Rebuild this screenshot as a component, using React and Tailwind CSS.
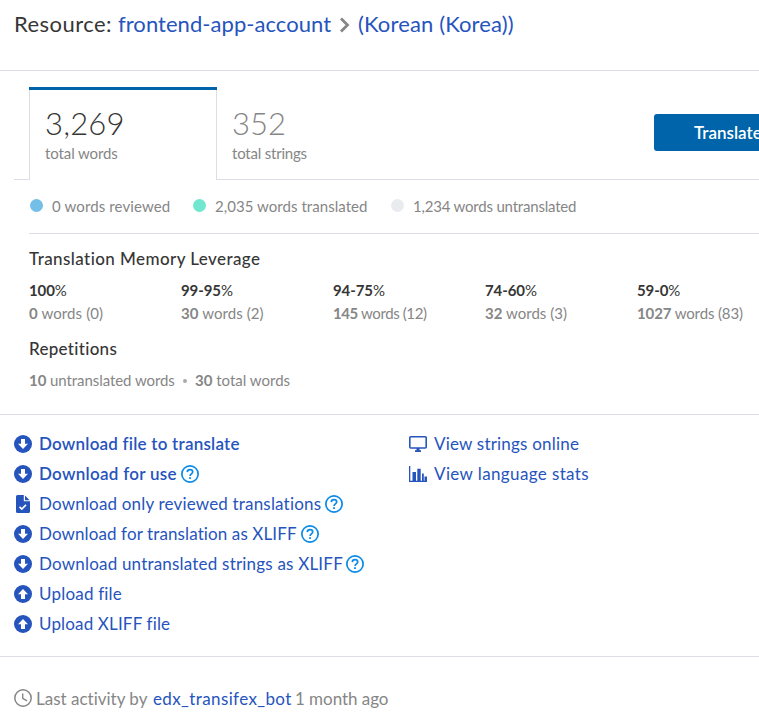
import React from "react";

const line = "border-[#dcdee5]";

function ArrowIcon({ up }) {
  return (
    <svg width="18" height="18" viewBox="0 0 18 18" className="block">
      <circle cx="9" cy="9" r="9" fill="#2654bd" />
      <path d={up ? "M9 4 14 9.2h-3V14H7V9.2H4z" : "M9 14 4 8.8h3V4h4v4.800h3z"} fill="#fff" />
    </svg>
  );
}

function FileCheckIcon() {
  return (
    <svg width="18" height="18" viewBox="0 0 18 18" className="block">
      <path d="M3.500 0H9.800v6.200H16V16.500A1.500 1.500 0 0 1 14.500 18h-11A1.500 1.500 0 0 1 2 16.500v-15A1.500 1.500 0 0 1 3.500 0z" fill="#2654bd" />
      <path d="M11 .6 15.600 5.200H11z" fill="#2654bd" />
      <path d="M5.500 11.800 7.800 14l4.200-4.200" fill="none" stroke="#fff" strokeWidth="1.700" />
    </svg>
  );
}

function HelpIcon() {
  return (
    <svg width="18" height="18" viewBox="0 0 18 18" className="block shrink-0">
      <circle cx="9" cy="9" r="8.150" fill="none" stroke="#0b8be6" strokeWidth="1.700" />
      <path d="M6.300 7.100A2.650 2.500 0 0 1 9 4.700c1.500 0 2.700.9 2.700 2.300 0 1.900-2.600 2-2.600 4" fill="none" stroke="#0b8be6" strokeWidth="1.700" />
      <rect x="8.100" y="12.200" width="1.800" height="1.800" fill="#0b8be6" />
    </svg>
  );
}

function MonitorIcon() {
  return (
    <svg width="18" height="18" viewBox="0 0 18 18" className="block">
      <rect x=".8" y="1.800" width="16.400" height="11.200" rx="1" fill="none" stroke="#2654bd" strokeWidth="1.600" />
      <path d="M7.500 13h3v2.300H12V17H6v-1.700h1.500z" fill="#2654bd" />
    </svg>
  );
}

function ChartIcon() {
  return (
    <svg width="18" height="18" viewBox="0 0 18 18" className="block">
      <path d="M0 1h1.300v14.700H18V17H0zM3.500 7H7v8.800H3.500zM8.300 3.700h3.400v12.100H8.300zM13 8.500h1.800v7.300H13zM15.500 11.500H18V16h-2.500z" fill="#2654bd" />
    </svg>
  );
}

function Action({ icon, label, className = "", help }) {
  return (
    <div className="flex h-[30px] items-center">
      <span className="w-[25px] shrink-0">{icon}</span>
      <a className={`whitespace-nowrap text-[17px] text-[#2654bd] ${className}`}>{label}</a>
      {help && <HelpIcon />}
    </div>
  );
}

function Legend({ color, label, className }) {
  return (
    <div className={`flex items-center ${className}`}>
      <span className={`mr-[9px] size-[13px] rounded-full ${color}`} />
      <span className="whitespace-nowrap text-[15px] leading-5">{label}</span>
    </div>
  );
}

const leverage = [
  ["100", "0", "(0)", "tracking-[0.1px]"],
  ["99-95", "30", "(2)", "tracking-[0.08px]"],
  ["94-75", "145", "(12)", "tracking-[-0.4px]"],
  ["74-60", "32", "(3)", "tracking-[0.02px]"],
  ["59-0", "1027", "(83)", "tracking-[-0.13px]"],
];

export default function App() {
  return (
    <div className="h-[726px] w-[759px] overflow-hidden bg-white font-['Lato',sans-serif] text-[#868686] [font-variant-ligatures:none]">
      <header className={`flex h-[71px] border-b ${line} pl-3.5 pt-[9px] text-[22px] leading-[30px] whitespace-nowrap`}>
        <span className="w-[104px] tracking-[0.45px] text-[#363636]">Resource:</span>
        <a className="w-[221px] tracking-[0.05px] text-[#2654bd]">frontend-app-account</a>
        <svg width="11" height="16" viewBox="0 0 11 16" className="mt-2 mr-2">
          <path d="M2 1.500 8.500 8 2 14.500" fill="none" stroke="#868686" strokeWidth="2.800" />
        </svg>
        <a className="tracking-[0.13px] text-[#2654bd]">(Korean (Korea))</a>
      </header>

      <section className="flex pt-4 pl-3.5">
        <div className={`w-[15px] shrink-0 border-b ${line}`} />
        <div className="w-[188px] shrink-0 border-t-[3px] border-[#0064ab]">
          <div className={`h-[90px] border-x ${line} pl-[15px] pt-[15px]`}>
            <div className="text-[31px] leading-9 font-light tracking-[0.2px] text-[#363636]">3,269</div>
            <div className="mt-[2px] text-[15px] leading-5 tracking-[-0.1px]">total words</div>
          </div>
        </div>
        <div className={`flex min-w-0 flex-1 border-b ${line} pl-[15px] pt-[18px]`}>
          <div className="w-[422px] shrink-0">
            <div className="text-[31px] leading-9 font-light">352</div>
            <div className="mt-[2px] text-[15px] leading-5 tracking-[-0.2px]">total strings</div>
          </div>
          <button className="mt-[9px] h-[37px] w-[150px] shrink-0 rounded-l-[3px] bg-[#0064ab] pl-10 text-left text-[17px] font-semibold text-white">Translate</button>
        </div>
      </section>

      <section className="pl-[29px]">
        <div className={`flex h-[54px] items-center border-b ${line} pb-[2px] pl-px`}>
          <Legend color="bg-[#74bfe8]" label="0 words reviewed" className="w-[163px] tracking-[0.12px]" />
          <Legend color="bg-[#72e7d0]" label="2,035 words translated" className="w-[198px] tracking-[0.05px]" />
          <Legend color="bg-[#e9ebef]" label="1,234 words untranslated" className="tracking-[-0.2px]" />
        </div>
        <h2 className="mt-[15px] text-[17px] leading-5 font-medium tracking-[0.42px] text-[#363636]">Translation Memory Leverage</h2>
        <div className="mt-[10px] flex text-[15px] leading-[23px] whitespace-nowrap">
          {leverage.map(([range, words, count, tracking]) => (
            <div key={range} className="w-[152px] shrink-0">
              <div className="tracking-[-0.1px] text-[#363636]"><b>{range}</b>%</div>
              <div className={tracking}><b>{words}</b> words {count}</div>
            </div>
          ))}
        </div>
        <h2 className="mt-[14px] text-[17px] leading-5 font-medium tracking-[0.3px] text-[#363636]">Repetitions</h2>
        <div className="mt-[11px] flex items-center text-[15px] leading-5 whitespace-nowrap">
          <span className="w-[154px] tracking-[-0.07px]"><b>10</b> untranslated words</span>
          <span className="mt-0.5 mr-2 size-1 rounded-full bg-[#aaaaaa]" />
          <span><b>30</b> total words</span>
        </div>
      </section>

      <section className={`mt-6 flex h-[243px] border-y ${line} pt-3.5 pl-3.5`}>
        <div className="w-[395px]">
          <Action icon={<ArrowIcon />} label="Download file to translate" className="font-semibold tracking-[0.22px]" />
          <Action icon={<ArrowIcon />} label="Download for use" className="w-[142px] font-semibold tracking-[0.28px]" help />
          <Action icon={<FileCheckIcon />} label="Download only reviewed translations" className="w-[286px] tracking-[0.18px]" help />
          <Action icon={<ArrowIcon />} label="Download for translation as XLIFF" className="w-[262px] tracking-[0.11px]" help />
          <Action icon={<ArrowIcon />} label="Download untranslated strings as XLIFF" className="w-[307px] tracking-[0.2px]" help />
          <Action icon={<ArrowIcon up />} label="Upload file" className="tracking-[0.2px]" />
          <Action icon={<ArrowIcon up />} label="Upload XLIFF file" className="tracking-[0.16px]" />
        </div>
        <div>
          <Action icon={<MonitorIcon />} label="View strings online" className="tracking-[0.2px]" />
          <Action icon={<ChartIcon />} label="View language stats" className="tracking-[0.38px]" />
        </div>
      </section>

      <footer className="flex pt-8 pl-3.5 text-[17px] leading-5 whitespace-nowrap">
        <svg width="18" height="18" viewBox="0 0 18 18" className="mr-1">
          <circle cx="9" cy="9" r="8.200" fill="none" stroke="#868686" strokeWidth="1.500" />
          <path d="M8.700 4.500V9.300L13 11.800" fill="none" stroke="#868686" strokeWidth="1.400" />
        </svg>
        <span className="w-[117px]">Last activity by</span>
        <a className="w-[142px] tracking-[0.38px] text-[#2654bd]">edx_transifex_bot</a>
        <span className="tracking-[-0.05px]">1 month ago</span>
      </footer>
    </div>
  );
}
